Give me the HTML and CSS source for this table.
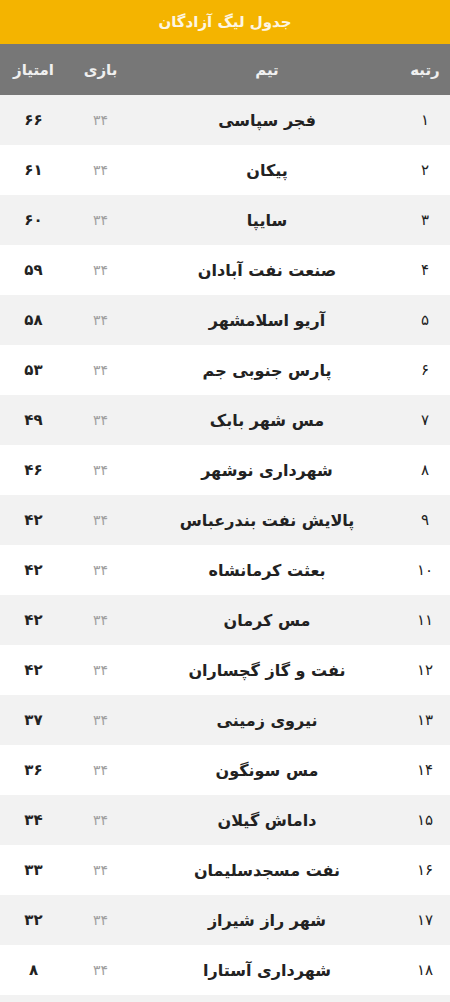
FILE: index.html
```html
<!DOCTYPE html>
<html lang="fa" dir="rtl">
<head>
<meta charset="utf-8">
<link rel="stylesheet" href="styles.css">
</head>
<body>
<div class="league">
  <div class="title">جدول لیگ آزادگان</div>
  <div class="row head">
    <div class="c rank">رتبه</div>
    <div class="c team">تیم</div>
    <div class="c games">بازی</div>
    <div class="c pts">امتیاز</div>
  </div>
  <div class="row"><div class="c rank">۱</div><div class="c team">فجر سپاسی</div><div class="c games">۳۴</div><div class="c pts">۶۶</div></div>
  <div class="row"><div class="c rank">۲</div><div class="c team">پیکان</div><div class="c games">۳۴</div><div class="c pts">۶۱</div></div>
  <div class="row"><div class="c rank">۳</div><div class="c team">سایپا</div><div class="c games">۳۴</div><div class="c pts">۶۰</div></div>
  <div class="row"><div class="c rank">۴</div><div class="c team">صنعت نفت آبادان</div><div class="c games">۳۴</div><div class="c pts">۵۹</div></div>
  <div class="row"><div class="c rank">۵</div><div class="c team">آریو اسلامشهر</div><div class="c games">۳۴</div><div class="c pts">۵۸</div></div>
  <div class="row"><div class="c rank">۶</div><div class="c team">پارس جنوبی جم</div><div class="c games">۳۴</div><div class="c pts">۵۳</div></div>
  <div class="row"><div class="c rank">۷</div><div class="c team">مس شهر بابک</div><div class="c games">۳۴</div><div class="c pts">۴۹</div></div>
  <div class="row"><div class="c rank">۸</div><div class="c team">شهرداری نوشهر</div><div class="c games">۳۴</div><div class="c pts">۴۶</div></div>
  <div class="row"><div class="c rank">۹</div><div class="c team">پالایش نفت بندرعباس</div><div class="c games">۳۴</div><div class="c pts">۴۲</div></div>
  <div class="row"><div class="c rank">۱۰</div><div class="c team">بعثت کرمانشاه</div><div class="c games">۳۴</div><div class="c pts">۴۲</div></div>
  <div class="row"><div class="c rank">۱۱</div><div class="c team">مس کرمان</div><div class="c games">۳۴</div><div class="c pts">۴۲</div></div>
  <div class="row"><div class="c rank">۱۲</div><div class="c team">نفت و گاز گچساران</div><div class="c games">۳۴</div><div class="c pts">۴۲</div></div>
  <div class="row"><div class="c rank">۱۳</div><div class="c team">نیروی زمینی</div><div class="c games">۳۴</div><div class="c pts">۳۷</div></div>
  <div class="row"><div class="c rank">۱۴</div><div class="c team">مس سونگون</div><div class="c games">۳۴</div><div class="c pts">۳۶</div></div>
  <div class="row"><div class="c rank">۱۵</div><div class="c team">داماش گیلان</div><div class="c games">۳۴</div><div class="c pts">۳۴</div></div>
  <div class="row"><div class="c rank">۱۶</div><div class="c team">نفت مسجدسلیمان</div><div class="c games">۳۴</div><div class="c pts">۳۳</div></div>
  <div class="row"><div class="c rank">۱۷</div><div class="c team">شهر راز شیراز</div><div class="c games">۳۴</div><div class="c pts">۳۲</div></div>
  <div class="row"><div class="c rank">۱۸</div><div class="c team">شهرداری آستارا</div><div class="c games">۳۴</div><div class="c pts">۸</div></div>
  <div class="footer"></div>
</div>
</body>
</html>
```

FILE: styles.css
```css
html, body {
  margin: 0;
  padding: 0;
  background: #ffffff;
}
body {
  font-family: "DejaVu Sans", "Noto Sans", sans-serif;
  direction: rtl;
}
.league {
  width: 450px;
}
.title {
  height: 44px;
  background: #f4b400;
  color: #fdf6e4;
  font-weight: bold;
  font-size: 15px;
  display: flex;
  align-items: center;
  justify-content: center;
}
.row {
  display: grid;
  grid-template-columns: 50px 266px 67px 67px;
  height: 50px;
  align-items: center;
  background: #ffffff;
}
.row:nth-child(odd) {
  background: #f2f2f2;
}
.row.head {
  height: 51px;
  background: #777777;
  font-weight: bold;
  font-size: 15px;
}
.c {
  text-align: center;
}
.rank {
  color: #222;
  font-size: 15px;
}
.team {
  color: #222;
  font-weight: bold;
  font-size: 16px;
}
.games {
  color: #a0a0a0;
  font-size: 14px;
}
.pts {
  color: #222;
  font-weight: bold;
  font-size: 15px;
}
.row.head .c {
  color: #f0f0f0;
  font-size: 15px;
}
.footer {
  height: 7px;
  background: #f2f2f2;
}
```
